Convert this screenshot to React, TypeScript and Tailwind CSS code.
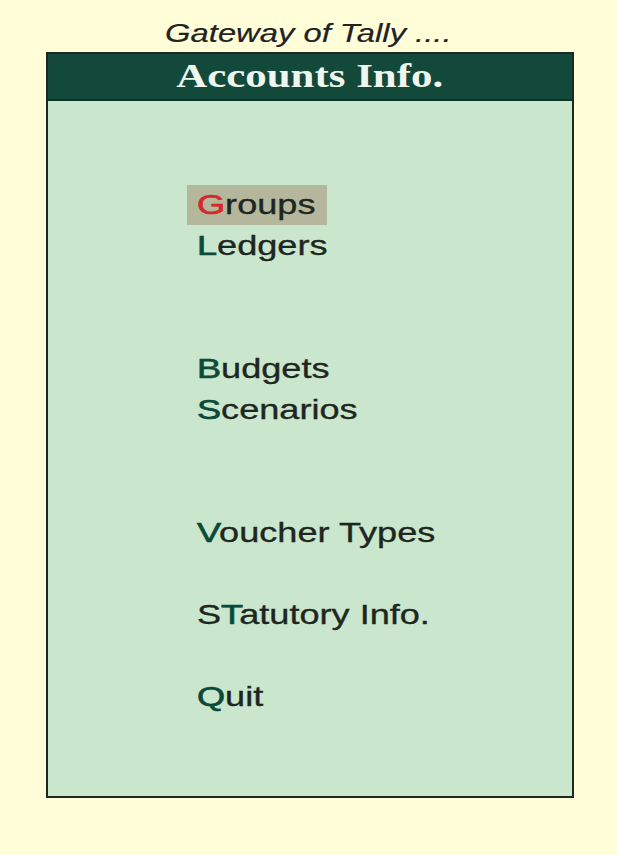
import React from 'react';

type Item = { hot: string; rest: string; pre?: string; selected?: boolean } | null;

// null = blank line in the menu
const items: Item[] = [
  { hot: 'G', rest: 'roups', selected: true },
  { hot: 'L', rest: 'edgers' },
  null,
  null,
  { hot: 'B', rest: 'udgets' },
  { hot: 'S', rest: 'cenarios' },
  null,
  null,
  { hot: 'V', rest: 'oucher Types' },
  null,
  { pre: 'S', hot: 'T', rest: 'atutory Info.' },
  null,
  { hot: 'Q', rest: 'uit' },
];

export default function App() {
  return (
    <div
      className="min-h-screen w-full bg-[#fffed8]"
      style={{ fontFamily: '"Liberation Sans", Arial, sans-serif' }}
    >
      {/* Title */}
      <div className="h-[52px] pt-[14px] flex items-center justify-center">
        <span className="inline-block origin-center scale-x-[1.31] italic text-[25px] leading-none text-[#222222] [-webkit-text-stroke:0.2px_#222222]">
          Gateway of Tally ....
        </span>
      </div>

      {/* Menu box */}
      <div className="ml-[46px] w-[528px] h-[746px] border-2 border-[#1b2a20] bg-[#cae6cc] flex flex-col">
        <div className="h-[47px] bg-[#12493b] border-b-2 border-[#0c3329] flex items-center justify-center">
          <span
            className="inline-block origin-center scale-x-[1.3] font-bold text-[33px] leading-none text-[#eef6ee]"
            style={{ fontFamily: '"Liberation Serif", "Times New Roman", serif' }}
          >
            Accounts Info.
          </span>
        </div>

        <div className="flex-1 pt-[83px] pl-[139px]">
          {items.map((it, i) =>
            it ? (
              <div key={i} className="h-[41px] flex items-center">
                <div
                  className={`h-[40px] flex items-center pl-[10px] ${
                    it.selected ? 'w-[140px] bg-[#b4b79c]' : ''
                  }`}
                >
                  <span className="inline-block origin-left scale-x-[1.29] text-[28px] leading-none text-[#1e2622] whitespace-nowrap [-webkit-text-stroke:0.35px_#1e2622]">
                    {it.pre}
                    <span
                      className={
                        it.selected
                          ? 'text-[#d8262a] [-webkit-text-stroke:0.7px_#d8262a]'
                          : 'text-[#0b4a3a] [-webkit-text-stroke:0.7px_#0b4a3a]'
                      }
                    >
                      {it.hot}
                    </span>
                    {it.rest}
                  </span>
                </div>
              </div>
            ) : (
              <div key={i} className="h-[41px]" />
            )
          )}
        </div>
      </div>
    </div>
  );
}
